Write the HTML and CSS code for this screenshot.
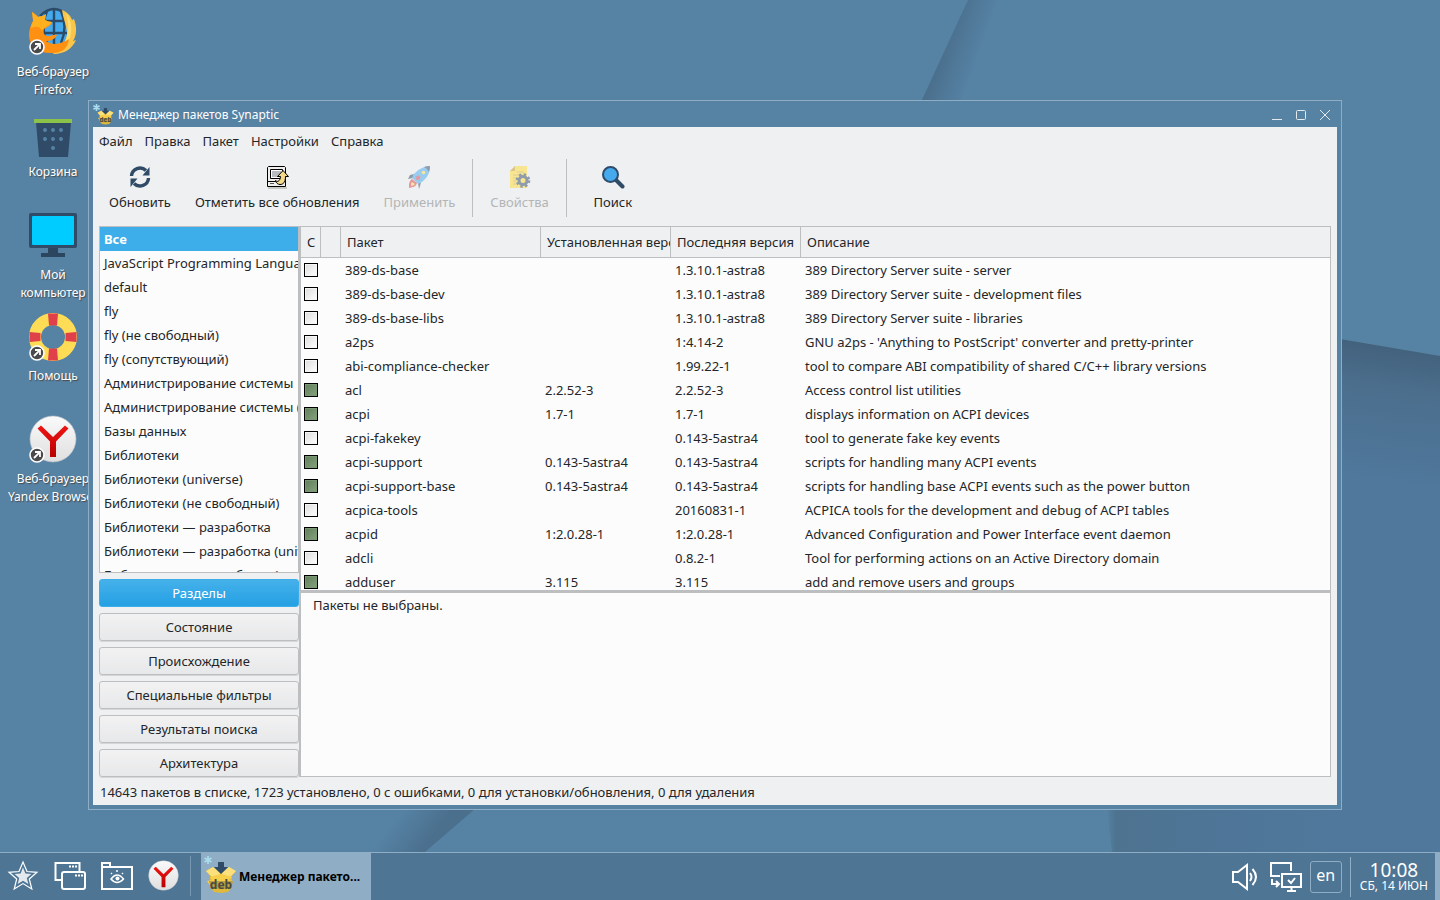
FILE: index.html
```
<!DOCTYPE html>
<html lang="ru">

<head>
	<meta charset="UTF-8">
	<title>Менеджер пакетов Synaptic</title>
	<link rel="stylesheet" href="styles.css">
</head>

<body>
	<!-- shared symbols -->
	<svg class="symbols" aria-hidden="true">
		<defs>
			<linearGradient id="disc" x1="0" y1="0" x2="0" y2="1">
				<stop offset="0" stop-color="#fafafa" />
				<stop offset="1" stop-color="#dfdfdf" />
			</linearGradient>
			<linearGradient id="red" x1="0" y1="0" x2="0" y2="1">
				<stop offset="0" stop-color="#f01414" />
				<stop offset="1" stop-color="#b80000" />
			</linearGradient>
		</defs>
		<symbol id="shortcut" viewBox="0 0 16 16">
			<circle cx="8" cy="8" r="7" fill="#4a4a4a" stroke="#fff" stroke-width="1.6" />
			<path d="M5 11L10.400 5.600M6 5h5v5" fill="none" stroke="#fff" stroke-width="1.8" />
		</symbol>
		<symbol id="yandex" viewBox="0 0 48 48">
			<circle cx="24" cy="24" r="23" fill="url(#disc)" stroke="#b9c3ca" stroke-width=".6" />
			<path d="M8.500 13.500L12 10.500L24 22L36 10.500L39.500 13.500L27 26.500V42H21V26.500z" fill="url(#red)" />
		</symbol>
		<symbol id="deb" viewBox="0 0 32 32">
			<path d="M5 14L1 9l7-4 5 4h6l5-4 7 4-4 5v11l-4 5-7 1-7-1-4-5z" fill="#e0b83c" />
			<path d="M1 9l7-4 8 7-9 3zM31 9l-7-4-8 7 9 3z" fill="#fbe07c" />
			<path d="M5 15l11-3 11 3-3 3 4 1-3 6H6l-4-6 5-1z" fill="#f7cf4b" />
			<path d="M4 19h24l-2 8H6z" fill="#b9a048" />
			<path d="M13 0h6v5h4l-7 7-7-7h4z" fill="#2f4b67" />
			<text x="16" y="27" text-anchor="middle" class="deb-text">deb</text>
		</symbol>
		<symbol id="snow" viewBox="0 0 8 8">
			<path d="M4 0v8M.5 2l7 4M.5 6l7-4" stroke="#a9dced" stroke-width="1.800" />
		</symbol>
	</svg>

	<main class="desktop">
		<svg class="wallpaper" viewBox="0 0 1440 852" preserveAspectRatio="none" aria-hidden="true">
			<defs>
				<linearGradient id="fold1" gradientUnits="userSpaceOnUse" x1="940" y1="60" x2="974" y2="72">
					<stop offset="0" stop-color="#4b708e" />
					<stop offset="1" stop-color="#5682a4" />
				</linearGradient>
				<linearGradient id="fold2" gradientUnits="userSpaceOnUse" x1="1390" y1="345" x2="1370" y2="480">
					<stop offset="0" stop-color="#42617c" />
					<stop offset=".3" stop-color="#4b6e8c" />
					<stop offset="1" stop-color="#4f789c" />
				</linearGradient>
				<linearGradient id="fold3" gradientUnits="userSpaceOnUse" x1="437" y1="830" x2="405" y2="806">
					<stop offset="0" stop-color="#4b708e" />
					<stop offset="1" stop-color="#5682a4" />
				</linearGradient>
				<linearGradient id="fold4" gradientUnits="userSpaceOnUse" x1="1106" y1="0" x2="1440" y2="0">
					<stop offset="0" stop-color="#5682a4" />
					<stop offset=".03" stop-color="#4d7390" />
					<stop offset=".3" stop-color="#4e7596" />
					<stop offset=".7" stop-color="#4f789c" />
				</linearGradient>
			</defs>
			<path d="M968 0h30L950 130h-42z" fill="url(#fold1)" />
			<path d="M1340 339l100 17v496h-100z" fill="url(#fold2)" />
			<path d="M475 809L425 852H320V809z" fill="url(#fold3)" />
			<path d="M1104 780h236v72H1112z" fill="url(#fold4)" />
		</svg>

		<a class="shortcut firefox" href="#">
			<svg viewBox="0 0 48 48">
				<circle cx="25" cy="19" r="18" fill="#45a9ee" />
				<path d="M25 1v36M8 13h34M8 25h34M18 3q-7 16 0 32M32 3q7 16 0 32M11 8q14-14 28 0" fill="none" stroke="#2c4b69" stroke-width="2.400" />
				<path d="M33 2c5 2 9 6 10 10l2-1c3 8 3 16-1 22l3-1c-4 9-12 14-22 14l-7-5c12 2 21-5 20-18-1-7-4-13-5-21z" fill="#fbc54a" />
				<path d="M37 5c4 5 6 12 5 20-1 10-9 17-19 18 16-5 19-21 14-38z" fill="#ffdc72" />
				<path d="M3 4c2 1 4 3 6 5 3-1 6-1 8-3l-1 6c2 1 5 2 7 2-1 4-5 5-8 7-1 4 0 6 3 7 3 1 6-2 10-1-2 4-6 6-11 6 7 5 15 3 23-2-1 9-7 14-16 14C9 46 0 38 0 27 0 21 2 17 4 13z" fill="#ff9011" />
				<path d="M3 4c2 1 4 3 6 5 3-1 6-1 8-3l-1 6c2 1 5 2 7 2-3 5-8 4-10 9-2-5-6-5-11-3 0-4 3-7 2-9z" fill="#ffb01f" />
				<use href="#shortcut" x="0" y="31" width="16" height="16" />
			</svg>
			<span>Веб-браузер<br>Firefox</span>
		</a>
		<a class="shortcut trash" href="#">
			<svg viewBox="0 0 48 48">
				<path d="M7 14h35l-3 35H10z" fill="#2f4b67" />
				<path d="M5 11h38v4H5z" fill="#8bc34a" />
				<g fill="#5682a4">
					<circle cx="16" cy="22" r="2" /><circle cx="24" cy="22" r="2" /><circle cx="32" cy="22" r="2" />
					<circle cx="16" cy="31" r="2" /><circle cx="24" cy="31" r="2" /><circle cx="32" cy="31" r="2" />
					<circle cx="24" cy="40" r="2" />
				</g>
			</svg>
			<span>Корзина</span>
		</a>
		<a class="shortcut computer" href="#">
			<svg viewBox="0 0 48 48">
				<path d="M19 36h10v6h7v4H12v-4h7z" fill="#2c4660" />
				<rect y="2" width="48" height="35" rx="2" fill="#2f4b67" />
				<rect x="3" y="5" width="42" height="29" rx="1" fill="#00ccff" />
			</svg>
			<span>Мой<br>компьютер</span>
		</a>
		<a class="shortcut help" href="#">
			<svg viewBox="0 0 48 48">
				<circle cx="24" cy="25" r="18" fill="none" stroke="#ffdc55" stroke-width="12" />
				<path d="M19 1.500h10l-1 12h-8zM19 48.500h10l-1-12h-8zM.5 20v10l11-1v-8zM47.500 20v10l-11-1v-8z" fill="#df404a" />
				<use href="#shortcut" x="0" y="33" width="16" height="16" />
			</svg>
			<span>Помощь</span>
		</a>
		<a class="shortcut browser" href="#">
			<svg viewBox="0 0 48 48">
				<use href="#yandex" width="48" height="48" />
				<use href="#shortcut" x="0" y="32" width="16" height="16" />
			</svg>
			<span>Веб-браузер<br>Yandex Browser</span>
		</a>

		<section class="window">
			<header class="titlebar">
				<svg class="app-icon" viewBox="0 0 22 22">
					<use href="#deb" x="4" y="4" width="17" height="17" />
					<use href="#snow" x="0" y="0" width="7" height="7" />
				</svg>
				<h1>Менеджер пакетов Synaptic</h1>
				<button type="button" aria-label="Свернуть"><svg viewBox="0 0 12 12"><path d="M1 10.500h10" /></svg></button>
				<button type="button" aria-label="Развернуть"><svg viewBox="0 0 12 12"><rect x="1.500" y="1.500" width="9" height="9" rx="1" /></svg></button>
				<button type="button" aria-label="Закрыть"><svg viewBox="0 0 12 12"><path d="M1 1l10 10M11 1L1 11" /></svg></button>
			</header>

			<div class="client">
				<nav class="menu">
					<button type="button">Файл</button>
					<button type="button">Правка</button>
					<button type="button">Пакет</button>
					<button type="button">Настройки</button>
					<button type="button">Справка</button>
				</nav>

				<div class="toolbar">
					<button type="button">
						<svg viewBox="0 0 24 24">
							<path d="M3.500 11a8.500 8.500 0 0 1 14.500-5.500M20.500 13a8.500 8.500 0 0 1-14.500 5.500" fill="none" stroke="#2f4b67" stroke-width="3.400" />
							<path d="M21.500 2v8.500H14.500zM2.500 22v-8.500H9.500z" fill="#2f4b67" />
						</svg>
						Обновить
					</button>
					<button type="button">
						<svg viewBox="0 0 24 24">
							<path d="M3 23h19" stroke="#c8c8c4" stroke-width="2" />
							<path d="M3.500 1.500h16l1 1v14h-18v-14zM2.500 16.500h18v5h-18z" fill="#efefeb" stroke="#000" />
							<path d="M5.500 4.500h12v9h-12z" fill="#fff" stroke="#000" />
							<path d="M7 6h9v6H7z" fill="#b8bcc0" />
							<path d="M10.500 15.500c1.500 1.500 4.500 1.500 5-4h-3l5.500-6 5.500 6h-3c0 6-2.500 8-5.500 8-2 0-4-1.500-4.500-4z" fill="#f5d98a" stroke="#000" />
							<path d="M5 18.500h4" stroke="#555" />
						</svg>
						Отметить все обновления
					</button>
					<button type="button" disabled>
						<svg viewBox="0 0 24 24">
							<path d="M7 9L3 10 1 14l5-1zM14 17l-1 4-1 3-1-6z" fill="#2f4b67" />
							<path d="M5 14c-3 2-3 5-3 9 4-1 7-1 8-5z" fill="#df404a" />
							<path d="M5 17c-1 1-1 2-1 4 2 0 3-1 4-2z" fill="#ffdc55" />
							<path d="M5 13C8 6 14 2 23 1c0 9-5 15-12 18z" fill="#45a9ee" />
							<path d="M17 2q3-1 6-1 0 3-1 6-2-4-5-5z" fill="#2f4b67" />
							<circle cx="16.500" cy="7.500" r="1.800" fill="#ffdc55" />
							<path d="M11 10l1 1.500 2 .5-1.500 1.500v2L11 14.500 9 15l.5-2L8 11.500h2z" fill="#df404a" />
						</svg>
						Применить
					</button>
					<hr>
					<button type="button" disabled>
						<svg viewBox="0 0 24 24">
							<path d="M2 6l5-5h12v22H2z" fill="#ffdc35" />
							<path d="M2 6l5-5v5z" fill="#c99c22" />
							<path d="M5 10h9M5 13h5M5 16h3M5 19h3M9 7h7" stroke="#d2a63a" />
							<circle cx="15" cy="15.500" r="5.800" fill="none" stroke="#2f4b67" stroke-width="3" stroke-dasharray="2.300 2.255" />
							<circle cx="15" cy="15.500" r="4" fill="none" stroke="#2f4b67" stroke-width="3" />
						</svg>
						Свойства
					</button>
					<hr>
					<button type="button">
						<svg viewBox="0 0 24 24">
							<path d="M15 15l6.500 6.500" stroke="#2f4b67" stroke-width="4" stroke-linecap="round" />
							<circle cx="9.500" cy="9.500" r="7.500" fill="#45a9ee" stroke="#2f4b67" stroke-width="2" />
						</svg>
						Поиск
					</button>
				</div>

				<div class="panes">
					<aside class="sidebar">
						<ul class="sections">
							<li class="active">Все</li>
							<li>JavaScript Programming Language</li>
							<li>default</li>
							<li>fly</li>
							<li>fly (не свободный)</li>
							<li>fly (сопутствующий)</li>
							<li>Администрирование системы</li>
							<li>Администрирование системы (universe)</li>
							<li>Базы данных</li>
							<li>Библиотеки</li>
							<li>Библиотеки (universe)</li>
							<li>Библиотеки (не свободный)</li>
							<li>Библиотеки — разработка</li>
							<li>Библиотеки — разработка (universe)</li>
							<li>Библиотеки — разработка (не свободный)</li>
						</ul>
						<button type="button" class="button active">Разделы</button>
						<button type="button" class="button">Состояние</button>
						<button type="button" class="button">Происхождение</button>
						<button type="button" class="button">Специальные фильтры</button>
						<button type="button" class="button">Результаты поиска</button>
						<button type="button" class="button">Архитектура</button>
					</aside>

					<div class="content">
						<div class="packages">
							<table>
								<colgroup>
									<col class="col-status">
									<col class="col-mark">
									<col class="col-name">
									<col class="col-version">
									<col class="col-version">
									<col>
								</colgroup>
								<thead>
									<tr>
										<th>С</th>
										<th></th>
										<th>Пакет</th>
										<th>Установленная версия</th>
										<th>Последняя версия</th>
										<th>Описание</th>
									</tr>
								</thead>
								<tbody>
									<tr>
										<td><input type="checkbox" aria-labelledby="p1"></td>
										<td></td>
										<td id="p1">389-ds-base</td>
										<td></td>
										<td>1.3.10.1-astra8</td>
										<td>389 Directory Server suite - server</td>
									</tr>
									<tr>
										<td><input type="checkbox" aria-labelledby="p2"></td>
										<td></td>
										<td id="p2">389-ds-base-dev</td>
										<td></td>
										<td>1.3.10.1-astra8</td>
										<td>389 Directory Server suite - development files</td>
									</tr>
									<tr>
										<td><input type="checkbox" aria-labelledby="p3"></td>
										<td></td>
										<td id="p3">389-ds-base-libs</td>
										<td></td>
										<td>1.3.10.1-astra8</td>
										<td>389 Directory Server suite - libraries</td>
									</tr>
									<tr>
										<td><input type="checkbox" aria-labelledby="p4"></td>
										<td></td>
										<td id="p4">a2ps</td>
										<td></td>
										<td>1:4.14-2</td>
										<td>GNU a2ps - 'Anything to PostScript' converter and pretty-printer</td>
									</tr>
									<tr>
										<td><input type="checkbox" aria-labelledby="p5"></td>
										<td></td>
										<td id="p5">abi-compliance-checker</td>
										<td></td>
										<td>1.99.22-1</td>
										<td>tool to compare ABI compatibility of shared C/C++ library versions</td>
									</tr>
									<tr>
										<td><input type="checkbox" aria-labelledby="p6" checked></td>
										<td></td>
										<td id="p6">acl</td>
										<td>2.2.52-3</td>
										<td>2.2.52-3</td>
										<td>Access control list utilities</td>
									</tr>
									<tr>
										<td><input type="checkbox" aria-labelledby="p7" checked></td>
										<td></td>
										<td id="p7">acpi</td>
										<td>1.7-1</td>
										<td>1.7-1</td>
										<td>displays information on ACPI devices</td>
									</tr>
									<tr>
										<td><input type="checkbox" aria-labelledby="p8"></td>
										<td></td>
										<td id="p8">acpi-fakekey</td>
										<td></td>
										<td>0.143-5astra4</td>
										<td>tool to generate fake key events</td>
									</tr>
									<tr>
										<td><input type="checkbox" aria-labelledby="p9" checked></td>
										<td></td>
										<td id="p9">acpi-support</td>
										<td>0.143-5astra4</td>
										<td>0.143-5astra4</td>
										<td>scripts for handling many ACPI events</td>
									</tr>
									<tr>
										<td><input type="checkbox" aria-labelledby="p10" checked></td>
										<td></td>
										<td id="p10">acpi-support-base</td>
										<td>0.143-5astra4</td>
										<td>0.143-5astra4</td>
										<td>scripts for handling base ACPI events such as the power button</td>
									</tr>
									<tr>
										<td><input type="checkbox" aria-labelledby="p11"></td>
										<td></td>
										<td id="p11">acpica-tools</td>
										<td></td>
										<td>20160831-1</td>
										<td>ACPICA tools for the development and debug of ACPI tables</td>
									</tr>
									<tr>
										<td><input type="checkbox" aria-labelledby="p12" checked></td>
										<td></td>
										<td id="p12">acpid</td>
										<td>1:2.0.28-1</td>
										<td>1:2.0.28-1</td>
										<td>Advanced Configuration and Power Interface event daemon</td>
									</tr>
									<tr>
										<td><input type="checkbox" aria-labelledby="p13"></td>
										<td></td>
										<td id="p13">adcli</td>
										<td></td>
										<td>0.8.2-1</td>
										<td>Tool for performing actions on an Active Directory domain</td>
									</tr>
									<tr>
										<td><input type="checkbox" aria-labelledby="p14" checked></td>
										<td></td>
										<td id="p14">adduser</td>
										<td>3.115</td>
										<td>3.115</td>
										<td>add and remove users and groups</td>
									</tr>
								</tbody>
							</table>
						</div>
						<div class="details">Пакеты не выбраны.</div>
					</div>
				</div>

				<footer class="status">14643 пакетов в списке, 1723 установлено, 0 с ошибками, 0 для установки/обновления, 0 для удаления</footer>
			</div>
		</section>
	</main>

	<!-- bottom panel -->
	<div class="taskbar">
		<div class="launchers">
			<button type="button" aria-label="Пуск">
				<svg viewBox="0 0 32 32" fill="none" stroke="#fff">
					<path d="M16 2l4 9.500 10 .8-7.700 6.700 2.500 10L16 23.600 7.200 29l2.500-10L2 12.300l10-.8z" stroke-width="1.200" />
					<path d="M16 7.500l2.400 6 6 .5-4.600 4 1.500 6-5.300-3.300L10.700 24l1.500-6-4.600-4 6-.5z" fill="#e4e9ee" stroke="none" />
				</svg>
			</button>
			<button type="button" aria-label="Свернуть все окна">
				<svg viewBox="0 0 32 32" fill="none" stroke="#fff" stroke-width="2">
					<path d="M7 20H1.500V3h24v8" />
					<rect x="8" y="12" width="23" height="17" rx="2" />
					<path d="M15 6.500h9M21 15.500h9" stroke-dasharray="2 1" />
				</svg>
			</button>
			<button type="button" aria-label="Менеджер файлов">
				<svg viewBox="0 0 32 32" fill="none" stroke="#fff" stroke-width="2">
					<path d="M1 29V3h8v4h22v22zM1 7h8" />
					<path d="M10 19q6-8 12.500 0-6.500 7-12.500 0zM11 14l-1-1M21 14l1-1M16 12v-2" stroke-width="1.500" />
					<circle cx="16.500" cy="18.500" r="2" fill="#fff" stroke="none" />
				</svg>
			</button>
			<button type="button" aria-label="Yandex Browser">
				<svg viewBox="0 0 32 32"><use href="#yandex" x="0" y="0" width="31" height="31" /></svg>
			</button>
		</div>
		<button type="button" class="task">
			<svg viewBox="0 0 34 46">
				<use href="#deb" x="2" y="8" width="32" height="32" />
				<use href="#snow" x="1" y="2" width="8" height="8" />
			</svg>
			Менеджер пакето...
		</button>
		<div class="tray">
			<button type="button" aria-label="Громкость">
				<svg viewBox="0 0 32 32" fill="none" stroke="#fff" stroke-width="2">
					<path d="M3 11h5l9-7v24l-9-7H3z" />
					<path d="M20 12q3 4 0 8M22.500 8q7 8 0 16" />
				</svg>
			</button>
			<button type="button" aria-label="Сеть">
				<svg viewBox="0 0 32 32" fill="none" stroke="#fff" stroke-width="2">
					<path d="M10 15H1V2h20v8M2 18v5h6M6 20l3 3-3 3" />
					<rect x="12" y="13" width="19" height="13" />
					<path d="M18 19l3 3 4-5M21.500 26v4M17 30h9" />
				</svg>
			</button>
			<button type="button" class="layout">en</button>
			<div class="clock">
				<time class="time">10:08</time>
				<time class="date">СБ, 14 ИЮН</time>
			</div>
		</div>
	</div>
</body>

</html>
```
FILE: styles.css
```
* {
	box-sizing: border-box;
}

body {
	margin: 0;
	height: 100vh;
	display: flex;
	flex-direction: column;
	overflow: hidden;
	background-color: #5682a4;
	font-family: "Noto Sans", sans-serif;
	font-size: 13px;
	line-height: 18px;
	color: #232629;
}

button {
	margin: 0;
	padding: 0;
	border: none;
	background: none;
	font: inherit;
	color: inherit;
}

svg {
	flex: none;
}

.symbols {
	position: absolute;
	width: 0;
	height: 0;
}

.deb-text {
	font-size: 12px;
	font-weight: bold;
	fill: #4b4a3c;
}

/* desktop */
.desktop {
	position: relative;
	flex: 1;
	min-height: 0;
	overflow: hidden;
}

.wallpaper {
	position: absolute;
	width: 100%;
	height: 100%;
}

.shortcut {
	position: absolute;
	left: 3px;
	width: 100px;
	display: flex;
	flex-direction: column;
	align-items: center;
	gap: 7px;
	color: #fff;
	font-size: 12px;
	text-align: center;
	text-decoration: none;
	text-shadow: 1px 1px 1px #4a4a4a;
}

.shortcut svg {
	width: 48px;
	height: 48px;
	overflow: visible;
}

.firefox {
	top: 8px;
}

.trash {
	top: 108px;
}

.computer {
	top: 211px;
}

.help {
	top: 312px;
}

.browser {
	top: 415px;
}

/* window frame */
.window {
	position: absolute;
	top: 100px;
	right: 98px;
	bottom: 42px;
	left: 88px;
	display: flex;
	flex-direction: column;
	padding: 0 4px 4px;
	border: 1px solid #8fadc4;
	background-color: #5682a4;
}

.titlebar {
	height: 26px;
	display: flex;
	align-items: center;
	gap: 12px;
	padding: 2px 6px 0 0;
	color: #fff;
}

.titlebar h1 {
	flex: 1;
	margin: 0 0 0 -9px;
	font-size: 12px;
	font-weight: normal;
}

.app-icon {
	width: 22px;
	height: 22px;
}

.titlebar button {
	width: 12px;
	height: 12px;
}

.titlebar button svg {
	display: block;
	fill: none;
	stroke: #e4e9ee;
}

.client {
	flex: 1;
	min-height: 0;
	display: flex;
	flex-direction: column;
	background-color: #eff0f1;
}

.menu {
	display: flex;
	gap: 12px;
	padding: 5px 6px;
}

/* toolbar */
.toolbar {
	display: flex;
	height: 64px;
	padding: 4px 4px 2px;
}

.toolbar button {
	display: flex;
	flex-direction: column;
	align-items: center;
	gap: 4px;
	min-width: 82px;
	padding: 6px 12px 0;
}

.toolbar button svg {
	width: 24px;
	height: 24px;
}

.toolbar button:disabled {
	color: #b3b5b7;
}

.toolbar button:disabled svg {
	opacity: 0.5;
}

.toolbar hr {
	width: 1px;
	margin: 0 5px;
	border: none;
	background-color: #bcbebf;
}

/* main area */
.panes {
	flex: 1;
	min-height: 0;
	display: flex;
	margin: 7px 6px 0;
}

.sidebar {
	width: 200px;
	display: flex;
	flex-direction: column;
	gap: 6px;
}

.sections {
	flex: 1;
	min-height: 0;
	margin: 0;
	padding: 0;
	overflow: hidden;
	list-style-type: none;
	border: 1px solid #bcbebf;
	background-color: #fcfcfc;
}

.sections li {
	padding: 3px 4px;
	white-space: nowrap;
}

.sections li.active {
	background-color: #3daee9;
	color: #fff;
	font-weight: bold;
}

.button {
	flex: none;
	height: 28px;
	border: 1px solid #bcbebf;
	border-radius: 3px;
	background: linear-gradient(#f2f2f3, #e7e8e9);
	box-shadow: 0 1px 0 #d5d6d7;
}

.button.active {
	border-color: #3daee9;
	background: linear-gradient(#45b1ea, #24a0e4);
	color: #fff;
	box-shadow: none;
}

.content {
	flex: 1;
	min-width: 0;
	display: flex;
	flex-direction: column;
	border: solid #bcbebf;
	border-width: 1px 1px 1px 2px;
	background-color: #fcfcfc;
}

.packages {
	flex: 1;
	min-height: 0;
	overflow: hidden;
}

.packages table {
	width: 100%;
	table-layout: fixed;
	border-collapse: separate;
	border-spacing: 0;
}

.col-status,
.col-mark {
	width: 20px;
}

.col-name {
	width: 200px;
}

.col-version {
	width: 130px;
}

.packages th,
.packages td {
	padding: 0 4px;
	overflow: hidden;
	white-space: nowrap;
	text-align: left;
	font-weight: normal;
}

.packages th {
	height: 31px;
	padding: 0 0 0 6px;
	border: solid #bcbebf;
	border-width: 0 1px 1px 0;
	background-color: #eff0f1;
}

.packages th:last-child {
	border-right: none;
}

.packages td {
	height: 24px;
}

.packages td:first-child {
	padding: 0 3px;
}

.packages input {
	appearance: none;
	display: block;
	width: 14px;
	height: 14px;
	margin: 0;
	border: 1px solid #000;
	background: linear-gradient(135deg, #dcdcdc, #fff);
	box-shadow: inset 0 0 0 1px #f6f6f6;
}

.packages input:checked {
	background: linear-gradient(135deg, #5f7f58, #86a27f);
	box-shadow: inset 0 0 0 1px #7b9a74;
}

.details {
	height: 186px;
	padding: 3px 12px;
	border-top: 3px solid #bcbebf;
}

.status {
	padding: 6px 7px 4px;
}

/* taskbar */
.taskbar {
	flex: none;
	height: 48px;
	display: flex;
	border-top: 1px solid #8fadc4;
	border-right: 5px solid #8fadc4;
	background-color: #4e7594;
	color: #fff;
}

.launchers {
	display: flex;
	align-items: center;
	gap: 15px;
	margin: 3px 10px 4px 0;
	padding: 0 10px 0 7px;
	border-right: 1px solid #7898b1;
}

.launchers svg,
.tray svg {
	display: block;
	width: 32px;
	height: 32px;
}

.task {
	width: 170px;
	display: flex;
	align-items: center;
	gap: 2px;
	padding-left: 2px;
	background-color: #8fadc4;
	color: #000;
	font-size: 12px;
	font-weight: bold;
	white-space: nowrap;
}

.task svg {
	width: 34px;
	height: 46px;
}

.tray {
	display: flex;
	align-items: center;
	gap: 8px;
	margin-left: auto;
}

.layout {
	width: 32px;
	height: 32px;
	padding-bottom: 4px;
	border: 1px solid #8fadc4;
	border-radius: 3px;
	font-size: 16px;
}

.clock {
	display: flex;
	flex-direction: column;
	align-items: center;
	justify-content: center;
	height: 40px;
	padding: 0 7px 0 9px;
	border-left: 1px solid #8fadc4;
}

.time {
	font-size: 19px;
	line-height: 18px;
}

.date {
	font-size: 12px;
	line-height: 14px;
}
```
